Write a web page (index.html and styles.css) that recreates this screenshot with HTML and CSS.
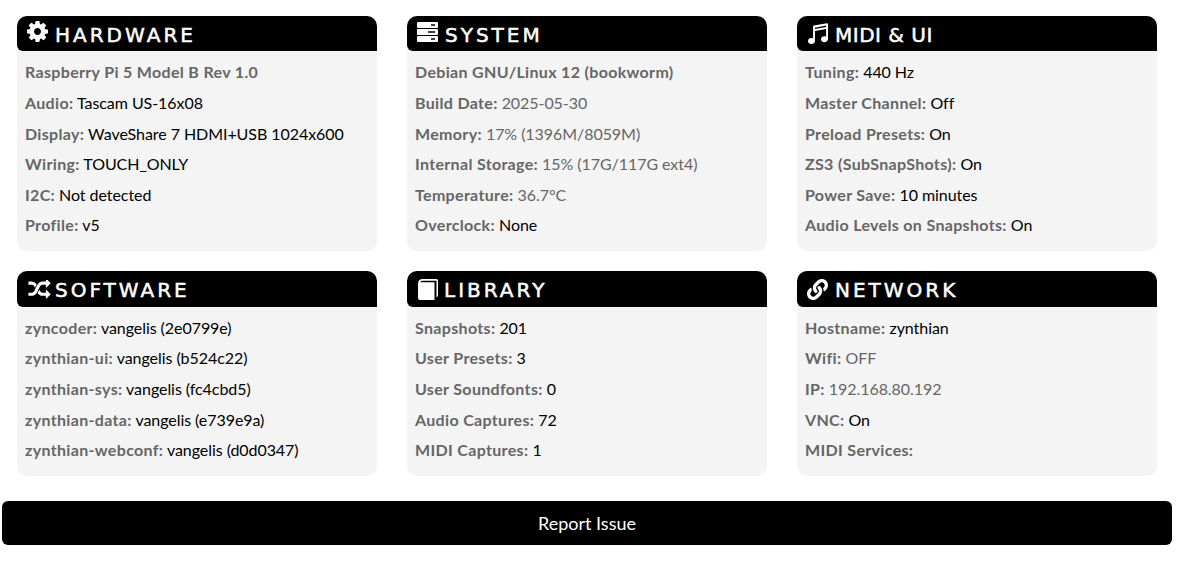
FILE: index.html
```html
<!DOCTYPE html>
<html>
<head>
  <meta charset="UTF-8">
  <title>Dashboard</title>
  <link rel="stylesheet" href="styles.css">
</head>
<body>
  <div class="grid">
    <div class="panel">
      <h3 class="panel-title">
        <svg class="icon icon-cog" viewBox="128 128 1536 1536"><path d="M1152 896q0-106-75-181t-181-75-181 75-75 181 75 181 181 75 181-75 75-181zm512-109v222q0 12-8 23t-20 13l-185 28q-19 54-39 91 35 50 107 138 10 12 10 25t-9 23q-27 37-99 108t-94 71q-12 0-26-9l-138-108q-44 23-91 38-16 136-29 186-7 28-36 28h-222q-14 0-24.5-8.5t-11.5-21.5l-28-184q-49-16-90-37l-141 107q-10 9-25 9-14 0-25-11-126-114-165-168-7-10-7-23 0-12 8-23 15-21 51-66.5t54-70.5q-27-50-41-99l-183-27q-13-2-21-12.5t-8-23.5v-222q0-12 8-23t19-13l186-28q14-46 39-92-40-57-107-138-10-12-10-24 0-10 9-23 26-36 98.5-107.5t94.5-71.5q13 0 26 10l138 107q44-23 91-38 16-136 29-186 7-28 36-28h222q14 0 24.5 8.5t11.5 21.5l28 184q49 16 90 37l142-107q9-9 24-9 13 0 25 10 129 119 165 170 7 8 7 22 0 12-8 23-15 21-51 66.5t-54 70.5q26 50 41 98l183 28q13 2 21 12.5t8 23.5z"/></svg>
        Hardware
      </h3>
      <div class="panel-body">
        <p><b>Raspberry Pi 5 Model B Rev 1.0</b></p>
        <p><b>Audio:</b> Tascam US-16x08</p>
        <p><b>Display:</b> WaveShare 7 HDMI+USB 1024x600</p>
        <p><b>Wiring:</b> TOUCH_ONLY</p>
        <p><b>I2C:</b> Not detected</p>
        <p><b>Profile:</b> v5</p>
      </div>
    </div>
    <div class="panel">
      <h3 class="panel-title">
        <svg class="icon icon-server" viewBox="0 0 21 20"><path fill-rule="evenodd" d="M1 0h19a1 1 0 0 1 1 1v4a1 1 0 0 1-1 1H1a1 1 0 0 1-1-1V1a1 1 0 0 1 1-1zM14 2.300v1.400h4V2.300zM1 7h19a1 1 0 0 1 1 1v4a1 1 0 0 1-1 1H1a1 1 0 0 1-1-1V8a1 1 0 0 1 1-1zM11 9.300v1.400h7V9.300zM1 14h19a1 1 0 0 1 1 1v4a1 1 0 0 1-1 1H1a1 1 0 0 1-1-1v-4a1 1 0 0 1 1-1zM14 16.300v1.400h4v-1.400z"/></svg>
        System
      </h3>
      <div class="panel-body">
        <p><b>Debian GNU/Linux 12 (bookworm)</b></p>
        <p><b>Build Date:</b> <span class="muted">2025-05-30</span></p>
        <p><b>Memory:</b> <span class="muted">17% (1396M/8059M)</span></p>
        <p><b>Internal Storage:</b> <span class="muted">15% (17G/117G ext4)</span></p>
        <p><b>Temperature:</b> <span class="muted">36.7°C</span></p>
        <p><b>Overclock:</b> None</p>
      </div>
    </div>
    <div class="panel">
      <h3 class="panel-title title-midi">
        <svg class="icon icon-music" viewBox="0 0 21 21"><path d="M20 0.300a1 1 0 0 1 1 1V16c0 2-1.800 3.200-3.700 3.200S14 18 14 16.300s1.500-3 3.300-3c.7 0 1.300.1 1.800.4V6L8 8v10c0 1.800-1.700 3-3.700 3S1 19.800 1 18.100s1.500-3 3.300-3c.7 0 1.300.1 1.800.4V3.500c0-.5.300-.9.800-1zM19.100 2.500L8 4.700v1.300l11.100-2.100z"/></svg>
        MIDI &amp; UI
      </h3>
      <div class="panel-body">
        <p><b>Tuning:</b> 440 Hz</p>
        <p><b>Master Channel:</b> Off</p>
        <p><b>Preload Presets:</b> On</p>
        <p><b>ZS3 (SubSnapShots):</b> On</p>
        <p><b>Power Save:</b> 10 minutes</p>
        <p><b>Audio Levels on Snapshots:</b> On</p>
      </div>
    </div>
    <div class="panel">
      <h3 class="panel-title">
        <svg class="icon icon-random" viewBox="0 128 1792 1536"><path d="M666 481q-60 92-137 273-22-45-37-72.500t-40.500-63.500-51-56.500-63-35-81.500-14.500h-224q-14 0-23-9t-9-23v-192q0-14 9-23t23-9h224q250 0 410 225zm1126 799q0 14-9 23l-320 320q-9 9-23 9-13 0-22.500-9.500t-9.500-22.500v-192q-32 0-85 .5t-81 1-73-1-71-5-64-10.500-63-18.500-58-28.500-59-40-55-53.500-56-69.500q59-93 136-273 22 45 37 72.500t40.500 63.500 51 56.500 63 35 81.500 14.500h256v-192q0-14 9-23t23-9q12 0 24 10l319 319q9 9 9 23zm0-896q0 14-9 23l-320 320q-9 9-23 9-13 0-22.500-9.500t-9.500-22.500v-192h-256q-48 0-87 15t-69 45-51 61.500-45 77.500q-32 62-78 171-29 66-49.500 111t-54 105-64 100-74 83-90 68.500-106.500 42-128 16.500h-224q-14 0-23-9t-9-23v-192q0-14 9-23t23-9h224q48 0 87-15t69-45 51-61.500 45-77.500q32-62 78-171 29-66 49.500-111t54-105 64-100 74-83 90-68.500 106.500-42 128-16.500h256v-192q0-14 9-23t23-9q12 0 24 10l319 319q9 9 9 23z"/></svg>
        Software
      </h3>
      <div class="panel-body">
        <p><b>zyncoder:</b> vangelis (2e0799e)</p>
        <p><b>zynthian-ui:</b> vangelis (b524c22)</p>
        <p><b>zynthian-sys:</b> vangelis (fc4cbd5)</p>
        <p><b>zynthian-data:</b> vangelis (e739e9a)</p>
        <p><b>zynthian-webconf:</b> vangelis (d0d0347)</p>
      </div>
    </div>
    <div class="panel">
      <h3 class="panel-title">
        <svg class="icon icon-book" viewBox="0 0 20 21"><path d="M4.500 0H18.500a1.500 1.500 0 0 1 1.500 1.500V17l-1.500 1.500V1.800H4.800C3.500 1.800 2.500 2.500 2.200 3.300H16.500V21H2a2 2 0 0 1-2-2V4.500C0 2 2 0 4.500 0z"/></svg>
        Library
      </h3>
      <div class="panel-body">
        <p><b>Snapshots:</b> 201</p>
        <p><b>User Presets:</b> 3</p>
        <p><b>User Soundfonts:</b> 0</p>
        <p><b>Audio Captures:</b> 72</p>
        <p><b>MIDI Captures:</b> 1</p>
      </div>
    </div>
    <div class="panel">
      <h3 class="panel-title">
        <svg class="icon icon-link" viewBox="0 0 512 512"><path d="M326.612 185.391c59.747 59.809 58.927 155.698.36 214.59-.11.12-.24.25-.36.37l-67.2 67.2c-59.27 59.27-155.699 59.262-214.96 0-59.27-59.26-59.27-155.7 0-214.96l37.106-37.106c9.84-9.84 26.786-3.3 27.294 10.606.648 17.722 3.826 35.527 9.69 52.721 1.986 5.822.567 12.262-3.783 16.612l-13.087 13.087c-28.026 28.026-28.905 73.66-1.155 101.96 28.024 28.579 74.086 28.749 102.325.51l67.2-67.19c28.191-28.191 28.073-73.757 0-101.83-3.701-3.694-7.429-6.564-10.341-8.569a16.037 16.037 0 0 1-6.947-12.606c-.396-10.567 3.348-21.456 11.698-29.806l21.054-21.055c5.521-5.521 14.182-6.199 20.584-1.731a152.482 152.482 0 0 1 20.522 17.197zM467.547 44.449c-59.261-59.262-155.69-59.27-214.96 0l-67.2 67.2c-.12.12-.25.25-.36.37-58.566 58.892-59.387 154.781.36 214.59a152.454 152.454 0 0 0 20.521 17.196c6.402 4.468 15.064 3.789 20.584-1.731l21.054-21.055c8.35-8.35 12.094-19.239 11.698-29.806a16.037 16.037 0 0 0-6.947-12.606c-2.912-2.005-6.64-4.875-10.341-8.569-28.073-28.073-28.191-73.639 0-101.83l67.2-67.19c28.239-28.239 74.3-28.069 102.325.51 27.75 28.3 26.872 73.934-1.155 101.96l-13.087 13.087c-4.35 4.35-5.769 10.79-3.783 16.612 5.864 17.194 9.042 34.999 9.69 52.721.509 13.906 17.454 20.446 27.294 10.606l37.106-37.106c59.271-59.259 59.271-155.699.001-214.959z"/></svg>
        Network
      </h3>
      <div class="panel-body">
        <p><b>Hostname:</b> zynthian</p>
        <p><b>Wifi:</b> <span class="muted">OFF</span></p>
        <p><b>IP:</b> <span class="muted">192.168.80.192</span></p>
        <p><b>VNC:</b> On</p>
        <p><b>MIDI Services:</b></p>
      </div>
    </div>
  </div>
  <button class="report-btn" type="button">Report Issue</button>
</body>
</html>
```

FILE: styles.css
```css
body {
  margin: 0;
  padding: 15.75px 14px 18px 2px;
  font-family: "Lato", sans-serif;
  font-size: 16px;
  color: #000;
  background: #fff;
}

.grid {
  display: grid;
  grid-template-columns: repeat(3, 360px);
  column-gap: 30px;
  row-gap: 20px;
  padding-left: 15px;
}

.panel {
  background: #f4f4f4;
  border-radius: 10px;
  padding-bottom: 10.4px;
}

.panel-title {
  display: flex;
  align-items: center;
  gap: 7px;
  box-sizing: border-box;
  height: 35.6px;
  margin: 0;
  padding: 2px 0 0 10px;
  background: #000;
  color: #fff;
  border-radius: 10px 10px 0 6px;
  font-family: "DejaVu Sans", sans-serif;
  font-size: 20px;
  font-weight: 400;
  letter-spacing: 3px;
  text-transform: uppercase;
  -webkit-text-stroke: 0.5px #fff;
}

.title-midi {
  letter-spacing: 0.5px;
}

.icon {
  display: block;
  flex: none;
  fill: #fff;
  stroke: none;
}

.icon-cog { width: 21px; height: 21px; margin-top: -6px; }
.icon-server { width: 21px; height: 20px; margin-top: -6px; }
.icon-music { width: 21px; height: 21px; margin-top: -2px; }
.icon-random { width: 25px; height: 19px; margin-top: -2px; margin-right: -4px; }
.icon-book { width: 20px; height: 21px; margin-top: -2px; margin-left: 1px; margin-right: -1px; }
.icon-link { width: 21px; height: 21px; margin-top: -1px; }

.panel-body {
  padding: 6px 8px 0;
}

.panel-body p {
  margin: 0;
  height: 30.6px;
  line-height: 30.6px;
  letter-spacing: -0.06px;
  white-space: nowrap;
}

.panel-body b {
  color: #666;
  font-weight: 700;
  letter-spacing: 0.33px;
}

.muted {
  color: #666;
}

.report-btn {
  display: block;
  width: 1170px;
  height: 44px;
  margin-top: 25px;
  border: none;
  border-radius: 6px;
  background: #000;
  color: #fff;
  font-family: "Lato", sans-serif;
  font-size: 18px;
}
```
